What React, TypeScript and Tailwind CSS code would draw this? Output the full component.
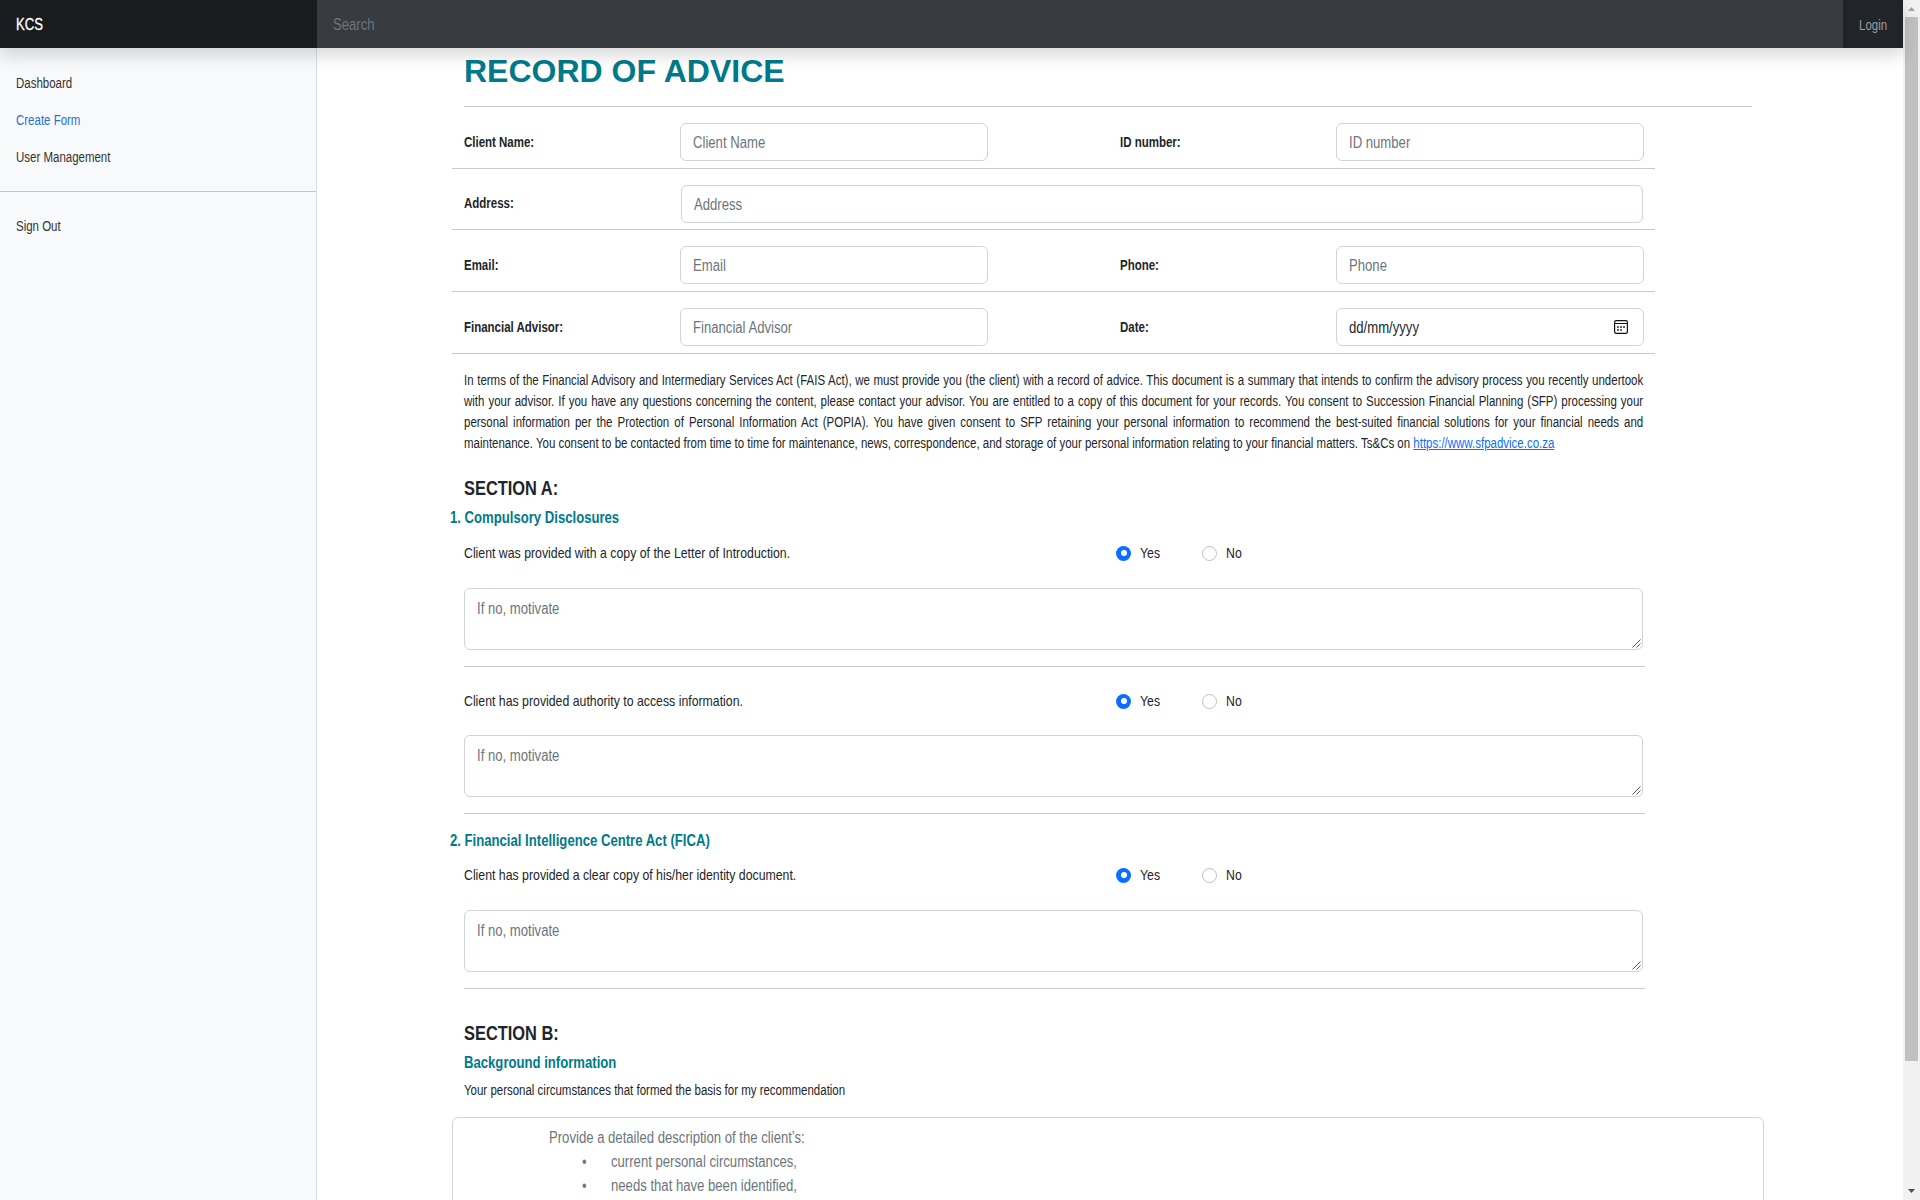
import type { ReactNode } from "react";

/* Condensed run of text: the regular face drawn at 82% width. */
function Narrow({ children, className = "" }: { children: ReactNode; className?: string }) {
  return (
    <span className={`block w-max origin-left scale-x-[0.82] whitespace-nowrap ${className}`}>{children}</span>
  );
}

const box = "overflow-hidden rounded-md border border-[#ced4da] bg-white";
const control =
  "block w-[121%] origin-left scale-x-[0.82] resize-none text-[16px] leading-6 text-[#212529] outline-none placeholder:text-[#6c757d] placeholder:opacity-100";

function Input({ placeholder, wide }: { placeholder: string; wide?: boolean }) {
  return (
    <div className={`${box} mt-4 h-[38px] shrink-0 pt-[7px] pl-3 ${wide ? "w-[962px]" : "w-[308px]"}`}>
      <input placeholder={placeholder} className={control} />
    </div>
  );
}

function Field({ label, date }: { label: string; date?: boolean }) {
  return (
    <div className="flex w-[656px] shrink-0">
      <div className="w-[216px] shrink-0 pt-[25px] text-[14px] leading-[21px] font-bold">
        <Narrow>{label}:</Narrow>
      </div>
      {date ? (
        <div className={`${box} mt-4 flex h-[38px] w-[308px] justify-between pt-[7px] pr-[15px] pl-3 text-[16px] leading-6`}>
          <Narrow>dd/mm/yyyy</Narrow>
          <svg width="14" height="14" viewBox="0 0 14 14" className="mt-1" fill="none" stroke="#111">
            <rect x="0.6" y="0.6" width="12.8" height="12.8" rx="1.6" strokeWidth="1.2" />
            <path d="M1 3.5h12" strokeWidth="1" />
            <path d="M3 7h2M6 7h2M9 7h2M3 10h2M6 10h2" strokeWidth="1.5" stroke="#333" />
          </svg>
        </div>
      ) : (
        <Input placeholder={label} />
      )}
    </div>
  );
}

function Radio({ label, checked }: { label: string; checked?: boolean }) {
  return (
    <label className="flex w-[86px] items-center">
      <span
        className={
          checked
            ? "flex size-[15px] items-center justify-center rounded-full bg-[#0d6efd]"
            : "size-[15px] rounded-full border border-[#bfbfbf] bg-white"
        }
      >
        {checked && <span className="size-[6px] rounded-full bg-white" />}
      </span>
      <Narrow className="ml-[9px]">{label}</Narrow>
    </label>
  );
}

function Question({ text, first }: { text: string; first?: boolean }) {
  return (
    <div className="w-[1181px] border-b border-[#c8c9ca] pb-4">
      <div className="flex h-6 items-center text-[15px] leading-6">
        <div className="w-[652px]">
          <Narrow>{text}</Narrow>
        </div>
        <Radio label="Yes" checked />
        <Radio label="No" />
      </div>
      <div className={`${box} relative h-[62px] w-[1179px] pt-2 pl-3 ${first ? "mt-[23px]" : "mt-[22px]"}`}>
        <textarea rows={2} placeholder="If no, motivate" className={control} />
        <svg width="9" height="9" viewBox="0 0 9 9" className="absolute right-px bottom-px" stroke="#555" strokeWidth="1">
          <path d="M0.5 8.5l8-8M4.5 8.5l4-4" />
        </svg>
      </div>
    </div>
  );
}

const items = ["current personal circumstances,", "needs that have been identified,"];

export default function App() {
  return (
    <div className="flex h-[1200px] w-[1920px] overflow-hidden bg-white font-['Liberation_Sans',Arial,sans-serif] text-[#212529]">
      <div className="flex w-[1903px] shrink-0 flex-col">
        <header className="relative z-10 flex h-12 shrink-0 bg-[#212529] shadow-[0_8px_16px_rgba(0,0,0,0.15)]">
          <div className="w-[317px] bg-[#191c1f] pt-px pl-4 text-[16px] leading-[48px] text-white">
            <Narrow className="[-webkit-text-stroke:0.3px_white]">KCS</Narrow>
          </div>
          <div className="w-[1526px] overflow-hidden bg-[#383b3f] pt-[13px] pl-4">
            <input placeholder="Search" className={control} />
          </div>
          <a className="flex-1 pt-px pl-4 text-[14px] leading-[48px] text-[#9b9d9f]">
            <Narrow>Login</Narrow>
          </a>
        </header>

        <div className="flex min-h-0 flex-1">
          <nav className="w-[317px] shrink-0 border-r border-[#dcddde] bg-[#f8f9fa] pt-4 text-[14px] leading-[21px] text-[#333]">
            <a className="block px-4 pt-[9px] pb-[7px]">
              <Narrow>Dashboard</Narrow>
            </a>
            <a className="block px-4 pt-[9px] pb-[7px] text-[#2470dc]">
              <Narrow>Create Form</Narrow>
            </a>
            <a className="block px-4 pt-[9px] pb-[7px]">
              <Narrow>User Management</Narrow>
            </a>
            <hr className="my-4 border-[#c2c4c6]" />
            <a className="block px-4 py-2">
              <Narrow>Sign Out</Narrow>
            </a>
          </nav>

          <main className="min-w-0 flex-1 overflow-hidden pl-[147px]">
            <h1 className="mt-1 h-[55px] w-[1288px] border-b border-[#c8c9ca] text-[32px] leading-[38px] font-bold text-[#007a8a]">
              RECORD OF ADVICE
            </h1>

            <div className="-ml-3 w-[1203px]">
              <div className="flex h-[62px] border-b border-[#c8c9ca] pl-3">
                <Field label="Client Name" />
                <Field label="ID number" />
              </div>
              <div className="flex h-[61px] border-b border-[#c8c9ca] pl-3">
                <div className="w-[217px] shrink-0 pt-6 text-[14px] leading-[21px] font-bold">
                  <Narrow>Address:</Narrow>
                </div>
                <Input placeholder="Address" wide />
              </div>
              <div className="flex h-[62px] border-b border-[#c8c9ca] pl-3">
                <Field label="Email" />
                <Field label="Phone" />
              </div>
              <div className="flex h-[62px] border-b border-[#c8c9ca] pl-3">
                <Field label="Financial Advisor" />
                <Field label="Date" date />
              </div>
            </div>

            <p className="mt-4 w-[1438px] origin-left scale-x-[0.82] text-justify text-[14px] leading-[21px]">
              In terms of the Financial Advisory and Intermediary Services Act (FAIS Act), we must provide you (the
              client) with a record of advice. This document is a summary that intends to confirm the advisory process
              you recently undertook with your advisor. If you have any questions concerning the content, please
              contact your advisor. You are entitled to a copy of this document for your records. You consent to
              Succession Financial Planning (SFP) processing your personal information per the Protection of Personal
              Information Act (POPIA). You have given consent to SFP retaining your personal information to recommend
              the best-suited financial solutions for your financial needs and maintenance. You consent to be
              contacted from time to time for maintenance, news, correspondence, and storage of your personal
              information relating to your financial matters. Ts&amp;Cs on{" "}
              <a className="text-[#0d6efd] underline">https://www.sfpadvice.co.za</a>
            </p>

            <h2 className="mt-[22px] text-[20px] leading-6 font-bold">
              <Narrow>SECTION A:</Narrow>
            </h2>
            <h3 className="mt-2 -ml-[14px] text-[16px] leading-[19px] font-bold text-[#007a8a]">
              <Narrow>1. Compulsory Disclosures</Narrow>
            </h3>
            <div className="mt-[14px]">
              <Question text="Client was provided with a copy of the Letter of Introduction." first />
            </div>
            <div className="mt-[22px]">
              <Question text="Client has provided authority to access information." />
            </div>
            <h3 className="mt-[17px] -ml-[14px] text-[16px] leading-[19px] font-bold text-[#007a8a]">
              <Narrow>2. Financial Intelligence Centre Act (FICA)</Narrow>
            </h3>
            <div className="mt-[13px]">
              <Question text="Client has provided a clear copy of his/her identity document." first />
            </div>

            <h2 className="mt-8 text-[20px] leading-6 font-bold">
              <Narrow>SECTION B:</Narrow>
            </h2>
            <h3 className="mt-2 text-[16px] leading-[19px] font-bold text-[#007a8a]">
              <Narrow>Background information</Narrow>
            </h3>
            <p className="mt-2 text-[14px] leading-[21px]">
              <Narrow>Your personal circumstances that formed the basis for my recommendation</Narrow>
            </p>
            <div className="mt-4 -ml-3 h-[160px] w-[1312px] rounded-md border border-[#ced4da] pt-2 pl-24 text-[16px] leading-6 text-[#6c757d]">
              <Narrow>Provide a detailed description of the client’s:</Narrow>
              {items.map((item) => (
                <div key={item} className="flex pl-[33px]">
                  <span className="w-[29px]">
                    <Narrow>•</Narrow>
                  </span>
                  <Narrow>{item}</Narrow>
                </div>
              ))}
            </div>
          </main>
        </div>
      </div>

      <div className="flex w-[17px] shrink-0 flex-col items-center bg-[#f1f1f1]">
        <svg width="17" height="17" viewBox="0 0 17 17" className="shrink-0" fill="#a3a3a3">
          <path d="M5 11h7L8.5 7z" />
        </svg>
        <div className="h-[1044px] w-[13px] bg-[#c1c1c1]" />
        <svg width="17" height="17" viewBox="0 0 17 17" className="mt-auto shrink-0" fill="#505050">
          <path d="M5 6h7L8.5 10z" />
        </svg>
      </div>
    </div>
  );
}
